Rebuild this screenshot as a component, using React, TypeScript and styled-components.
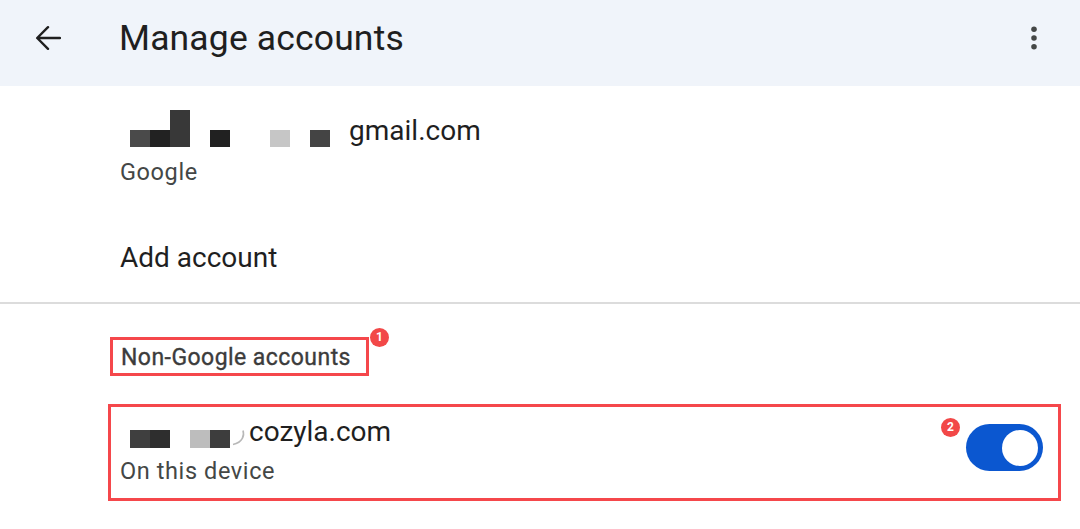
import styled, { createGlobalStyle } from 'styled-components'

const GlobalStyle = createGlobalStyle`
  html, body {
    margin: 0;
    padding: 0;
    background: #ffffff;
    overflow: hidden;
  }
  body {
    font-family: Roboto, "Noto Sans", Arial, sans-serif;
    color: #1f1f1f;
  }
`

type BlockData = { w: number; h: number; c: string; gap: number }

const gmailBlocks: BlockData[] = [
  { w: 20, h: 17, c: '#4a4a4a', gap: 0 },
  { w: 20, h: 17, c: '#222222', gap: 0 },
  { w: 20, h: 37, c: '#383838', gap: 0 },
  { w: 20, h: 17, c: '#212121', gap: 20 },
  { w: 20, h: 17, c: '#c6c6c6', gap: 40 },
  { w: 20, h: 17, c: '#444444', gap: 20 },
]

const cozylaBlocks: BlockData[] = [
  { w: 20, h: 18, c: '#3f3f3f', gap: 0 },
  { w: 20, h: 18, c: '#2e2e2e', gap: 0 },
  { w: 20, h: 18, c: '#bdbdbd', gap: 20 },
  { w: 20, h: 18, c: '#3d3d3d', gap: 0 },
]

export default function App() {
  return (
    <>
      <GlobalStyle />
      <Header>
        <IconButton aria-label="Back">
          <svg width="26" height="26" viewBox="0 0 26 26" fill="none">
            <path d="M25 13H2.5M13 2.2L2.2 13L13 23.8" stroke="#1f1f1f" strokeWidth="2.4" strokeLinecap="round" strokeLinejoin="round" />
          </svg>
        </IconButton>
        <Title>Manage accounts</Title>
        <IconButton aria-label="More options">
          <svg width="36" height="36" viewBox="0 0 24 24" fill="#444746">
            <circle cx="12" cy="6.2" r="1.85" />
            <circle cx="12" cy="12" r="1.85" />
            <circle cx="12" cy="17.8" r="1.85" />
          </svg>
        </IconButton>
      </Header>

      <AccountItem>
        <PrimaryLine>
          <Mosaic>
            {gmailBlocks.map((b, i) => (
              <Block key={i} $w={b.w} $h={b.h} $c={b.c} $gap={b.gap} />
            ))}
          </Mosaic>
          <Email $gap={19}>gmail.com</Email>
        </PrimaryLine>
        <SecondaryLine $gap={8}>Google</SecondaryLine>
      </AccountItem>

      <AddAccount>Add account</AddAccount>
      <Divider />

      <SectionLabel>
        Non-Google accounts
        <Badge $top={-12} $right={-23}>1</Badge>
      </SectionLabel>

      <HighlightedAccount>
        <AccountText>
          <PrimaryLine>
            <Mosaic>
              {cozylaBlocks.map((b, i) => (
                <Block key={i} $w={b.w} $h={b.h} $c={b.c} $gap={b.gap} />
              ))}
            </Mosaic>
            <Remnant width="14" height="16" viewBox="0 0 14 16" fill="none">
              <path d="M11 0.5C12.5 5 11 12.5 1 14.5" stroke="#b8b8b8" strokeWidth="1.6" />
            </Remnant>
            <Email $gap={3}>cozyla.com</Email>
          </PrimaryLine>
          <SecondaryLine $gap={6}>On this device</SecondaryLine>
        </AccountText>
        <Toggle role="switch" aria-checked="true">
          <Thumb />
          <Badge $top={-6} $right={83}>2</Badge>
        </Toggle>
      </HighlightedAccount>
    </>
  )
}

const Header = styled.header`
  display: flex;
  align-items: center;
  height: 86px;
  box-sizing: border-box;
  padding: 0 28px 10px 35px;
  background: #f0f4fa;
`

const IconButton = styled.div`
  display: flex;
  align-items: center;
  justify-content: center;
`

const Title = styled.h1`
  flex: 1;
  margin: 0 0 0 58px;
  font-size: 35.5px;
  font-weight: 400;
  line-height: 40px;
  letter-spacing: 0.15px;
  color: #1f1f1f;
`

const AccountItem = styled.section`
  display: flex;
  flex-direction: column;
  padding: 27px 0 0 120px;
`

const PrimaryLine = styled.div`
  display: flex;
  align-items: flex-end;
  height: 36px;
`

const Mosaic = styled.div`
  display: flex;
  align-items: flex-end;
  margin-left: 10px;
  margin-bottom: 2px;
`

const Block = styled.span<{ $w: number; $h: number; $c: string; $gap: number }>`
  display: block;
  width: ${(p) => p.$w}px;
  height: ${(p) => p.$h}px;
  background: ${(p) => p.$c};
  margin-left: ${(p) => p.$gap}px;
`

const Remnant = styled.svg`
  margin: 0 0 4px 2px;
`

const Email = styled.span<{ $gap: number }>`
  margin-left: ${(p) => p.$gap}px;
  font-size: 28px;
  line-height: 36px;
  color: #1f1f1f;
`

const SecondaryLine = styled.div<{ $gap: number }>`
  margin-top: ${(p) => p.$gap}px;
  font-size: 23.5px;
  line-height: 30px;
  letter-spacing: 0.6px;
  color: #444746;
`

const AddAccount = styled.div`
  margin: 53px 0 0 120px;
  font-size: 28px;
  line-height: 36px;
  color: #1f1f1f;
`

const Divider = styled.hr`
  margin: 26px 0 0;
  border: none;
  height: 2px;
  background: #dcdcdc;
`

const SectionLabel = styled.h2`
  position: relative;
  display: inline-block;
  margin: 33px 0 0 110px;
  padding: 2px 15px 0 8px;
  height: 31px;
  border: 3px solid #f5474b;
  font-size: 23px;
  font-weight: 400;
  line-height: 31px;
  letter-spacing: 0.45px;
  color: #3c3c3c;
  -webkit-text-stroke: 0.35px #3c3c3c;
`

const Badge = styled.span<{ $top: number; $right: number }>`
  position: absolute;
  top: ${(p) => p.$top}px;
  right: ${(p) => p.$right}px;
  width: 19px;
  height: 19px;
  border-radius: 50%;
  background: #f24848;
  color: #ffffff;
  font-size: 12px;
  font-weight: 700;
  line-height: 19px;
  letter-spacing: 0;
  text-align: center;
  -webkit-text-stroke: 0;
`

const HighlightedAccount = styled.section`
  display: flex;
  justify-content: space-between;
  align-items: flex-start;
  width: 953px;
  height: 97px;
  box-sizing: border-box;
  margin: 28px 0 0 108px;
  padding: 7px 15px 0 9px;
  border: 3px solid #f5474b;
`

const AccountText = styled.div`
  display: flex;
  flex-direction: column;
`

const Toggle = styled.div`
  position: relative;
  display: flex;
  align-items: center;
  justify-content: flex-end;
  width: 77px;
  height: 47px;
  box-sizing: border-box;
  margin-top: 10px;
  padding: 0 5px;
  border-radius: 24px;
  background: #0b57d0;
`

const Thumb = styled.span`
  width: 36px;
  height: 36px;
  border-radius: 50%;
  background: #ffffff;
`
